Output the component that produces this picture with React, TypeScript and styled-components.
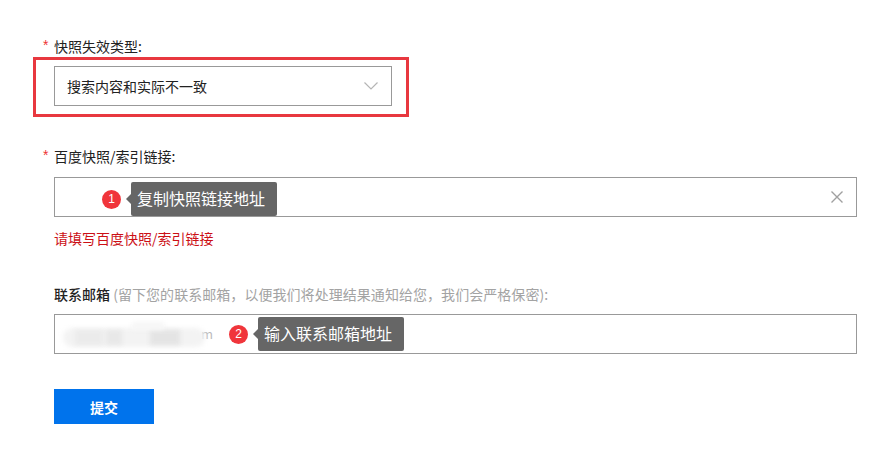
import React from "react";
import styled, { createGlobalStyle } from "styled-components";

const Global = createGlobalStyle`
  html, body { margin: 0; padding: 0; background: #fff; }
  body { font-family: "Noto Sans CJK SC", "Liberation Sans", sans-serif; }
`;

const Page = styled.div`
  width: 884px;
  height: 452px;
  box-sizing: border-box;
  padding: 36px 27px 0 54px;
  overflow: hidden;
  display: flex;
  flex-direction: column;
`;

const Label = styled.div<{ $bold?: boolean }>`
  position: relative;
  height: 20px;
  line-height: 20px;
  font-size: 14px;
  color: #222;
  font-weight: ${(p) => (p.$bold ? 500 : 400)};
  white-space: nowrap;
`;

const Star = styled.span`
  position: absolute;
  left: -11px;
  top: -1px;
  color: #e33;
  font-size: 14px;
  font-family: "Liberation Sans", sans-serif;
`;

const Hint = styled.span`
  color: #a3a3a3;
  font-weight: 400;
  letter-spacing: 0.05px;
`;

const Highlight = styled.div`
  margin: 1px 0 0 -21px;
  width: 376px;
  height: 60px;
  box-sizing: border-box;
  border: 3px solid #e8383f;
  padding: 6px 14px 0 18px;
`;

const Field = styled.div<{ $mt?: number }>`
  position: relative;
  box-sizing: border-box;
  height: 40px;
  margin-top: ${(p) => p.$mt ?? 0}px;
  border: 1px solid #999;
  background: #fff;
  display: flex;
  align-items: center;
  justify-content: space-between;
  padding: 0 12px;
  font-size: 14px;
  color: #222;
`;

const Chevron = styled.svg`
  width: 16px;
  height: 10px;
  margin-right: 0;
`;

const Clear = styled.svg`
  width: 14px;
  height: 14px;
`;

const Section = styled.div<{ $mt: number }>`
  margin-top: ${(p) => p.$mt}px;
`;

const ErrorText = styled.div`
  margin-top: 11px;
  height: 20px;
  line-height: 20px;
  font-size: 14px;
  color: #cc1016;
`;

const Smear = styled.div`
  position: relative;
  width: 150px;
  height: 38px;
  margin-left: -5px;
`;

const SmearBase = styled.div`
  position: absolute;
  left: 1px;
  top: 13px;
  width: 142px;
  height: 19px;
  border-radius: 9px;
  background: #f3f3f3;
  filter: blur(2.5px);
`;

const SmearBlock = styled.div<{ $l: number; $w: number; $t: number; $h: number; $c: string }>`
  position: absolute;
  left: ${(p) => p.$l}px;
  top: ${(p) => p.$t}px;
  width: ${(p) => p.$w}px;
  height: ${(p) => p.$h}px;
  background: ${(p) => p.$c};
  filter: blur(2px);
`;

const SmearTail = styled.span`
  position: absolute;
  left: 139px;
  top: 9px;
  line-height: 20px;
  font-size: 13px;
  color: #bbb;
`;

const Callout = styled.div<{ $left: number; $top: number }>`
  position: absolute;
  left: ${(p) => p.$left}px;
  top: ${(p) => p.$top}px;
  display: flex;
  align-items: center;
`;

const Badge = styled.div`
  width: 19px;
  height: 19px;
  border-radius: 50%;
  background: #f0353b;
  color: #fff;
  font-size: 12px;
  line-height: 19px;
  text-align: center;
  font-family: "Liberation Sans", sans-serif;
`;

const Tip = styled.div`
  position: relative;
  margin-left: 10px;
  width: 146px;
  height: 34px;
  box-sizing: border-box;
  border-radius: 2px;
  background: #666;
  color: #fff;
  font-size: 16px;
  line-height: 33px;
  padding-left: 6px;
  white-space: nowrap;

  &::before {
    content: "";
    position: absolute;
    left: -5px;
    top: 12px;
    border-style: solid;
    border-width: 5px 5px 5px 0;
    border-color: transparent #666 transparent transparent;
  }
`;

const Submit = styled.button`
  margin-top: 35px;
  width: 100px;
  height: 35px;
  border: 0;
  padding: 0;
  background: #0073ec;
  color: #fff;
  font-family: inherit;
  font-size: 14px;
  font-weight: 700;
`;

export default function App() {
  return (
    <Page>
      <Global />
      <Label>
        <Star>*</Star>快照失效类型:
      </Label>
      <Highlight>
        <Field>
          搜索内容和实际不一致
          <Chevron viewBox="0 0 16 10" fill="none" stroke="#b5b5b5" strokeWidth="1.2">
            <path d="M1.5 1.5l6.5 6.5 6.5-6.5" />
          </Chevron>
        </Field>
      </Highlight>

      <Section $mt={29}>
        <Label>
          <Star>*</Star>百度快照/索引链接:
        </Label>
        <Field $mt={11}>
          <span />
          <Clear viewBox="0 0 14 14" fill="none" stroke="#a0a0a0" strokeWidth="1.4">
            <path d="M1.5 1.5l11 11M12.5 1.5l-11 11" />
          </Clear>
          <Callout $left={47} $top={4}>
            <Badge>1</Badge>
            <Tip>复制快照链接地址</Tip>
          </Callout>
        </Field>
        <ErrorText>请填写百度快照/索引链接</ErrorText>
      </Section>

      <Section $mt={36}>
        <Label $bold>
          联系邮箱 <Hint>(留下您的联系邮箱，以便我们将处理结果通知给您，我们会严格保密):</Hint>
        </Label>
        <Field $mt={10}>
          <Smear>
            <SmearTail>m</SmearTail>
            <SmearBase />
            <SmearBlock $l={13} $w={28} $t={15} $h={15} $c="#ebebeb" />
            <SmearBlock $l={44} $w={16} $t={15} $h={15} $c="#e8e8e8" />
            <SmearBlock $l={88} $w={30} $t={15} $h={15} $c="#e4e4e4" />
            <SmearBlock $l={70} $w={32} $t={7} $h={8} $c="#f6f6f6" />
          </Smear>
          <Callout $left={174} $top={2}>
            <Badge>2</Badge>
            <Tip>输入联系邮箱地址</Tip>
          </Callout>
        </Field>
      </Section>

      <Submit>提交</Submit>
    </Page>
  );
}
